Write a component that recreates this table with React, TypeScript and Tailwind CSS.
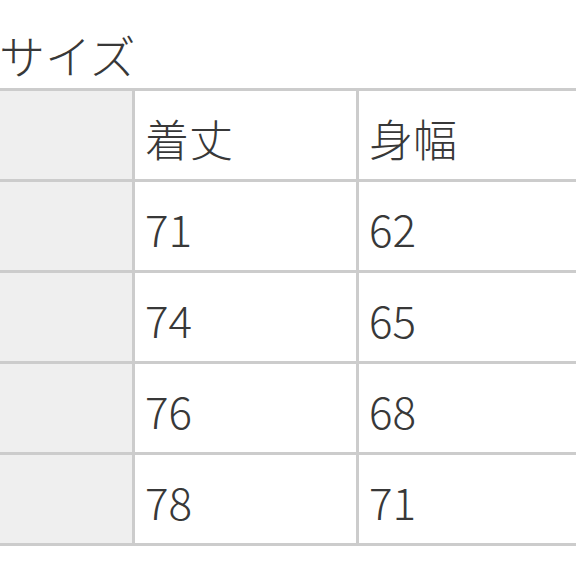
import React from 'react';

const rows = [
  { length: '71', width: '62' },
  { length: '74', width: '65' },
  { length: '76', width: '68' },
  { length: '78', width: '71' },
];

export default function App() {
  return (
    <div
      className="w-[576px] h-[576px] overflow-hidden bg-white text-[#383838]"
      style={{ fontFamily: '"Noto Sans CJK JP", "Noto Sans", sans-serif' }}
    >
      {/* Title */}
      <div className="pt-[24px] h-[88px] -ml-[1px] text-[46px] leading-[60px] font-light">
        サイズ
      </div>

      {/* Size table */}
      <table className="-ml-[4px] border-collapse table-fixed w-[640px]">
        <colgroup>
          <col className="w-[136px]" />
          <col className="w-[224px]" />
          <col />
        </colgroup>
        <thead>
          <tr className="h-[91px]">
            <th className="border-[3px] border-[#cccccc] bg-[#efefef]"></th>
            <th className="border-[3px] border-[#cccccc] text-left pl-[10px] pt-[6px] text-[44px] font-light">着丈</th>
            <th className="border-[3px] border-[#cccccc] text-left pl-[10px] pt-[6px] text-[44px] font-light">身幅</th>
          </tr>
        </thead>
        <tbody>
          {rows.map((row, index) => (
            <tr key={index} className="h-[91px]">
              <td className="border-[3px] border-[#cccccc] bg-[#efefef]"></td>
              <td className="border-[3px] border-[#cccccc] pl-[10px] pt-[4px] text-[44px] font-light">{row.length}</td>
              <td className="border-[3px] border-[#cccccc] pl-[10px] pt-[4px] text-[44px] font-light">{row.width}</td>
            </tr>
          ))}
        </tbody>
      </table>
    </div>
  );
}
